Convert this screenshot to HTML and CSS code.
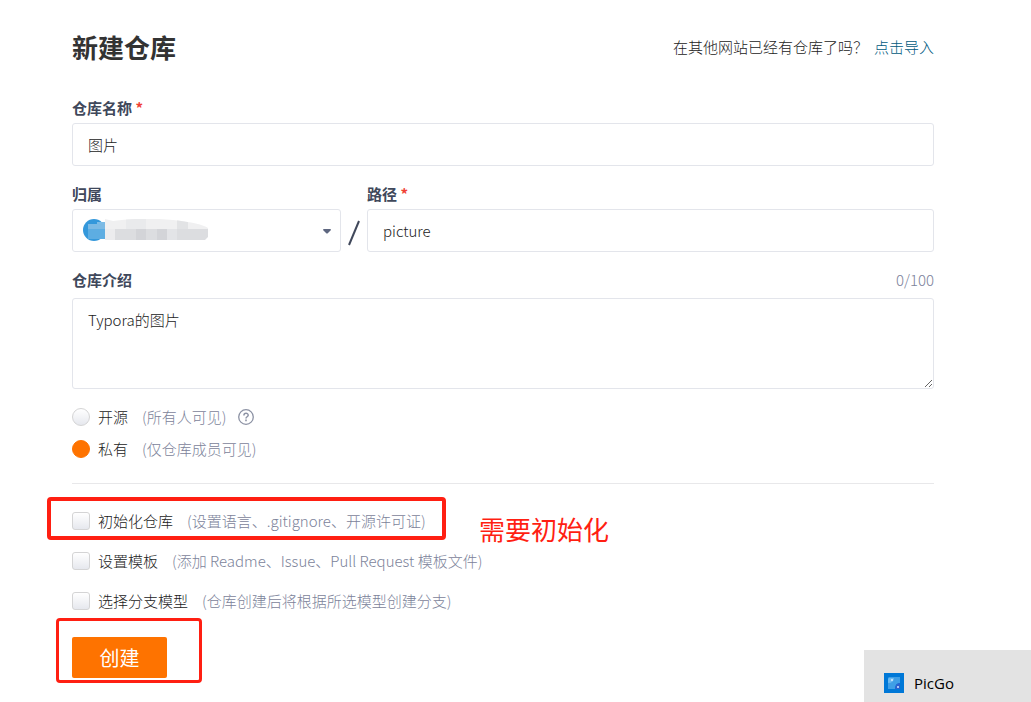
FILE: index.html
```html
<!DOCTYPE html>
<html lang="zh-CN">
<head>
    <meta charset="UTF-8">
    <meta name="viewport" content="width=device-width, initial-scale=1.0">
    <title>新建仓库</title>
    <link rel="stylesheet" href="styles.css">
</head>
<body>
    <main class="container">
        <header class="page-header">
            <h1>新建仓库</h1>
            <p class="import-tip">在其他网站已经有仓库了吗？<a href="#">点击导入</a></p>
        </header>

        <form>
            <div class="form-group">
                <label class="title" for="name">仓库名称 <span class="required">*</span></label>
                <input type="text" id="name" value="图片">
            </div>

            <div class="form-row">
                <div class="form-group owner">
                    <label class="title" for="owner">归属</label>
                    <div class="select-box">
                        <select id="owner">
                            <option></option>
                        </select>
                        <svg class="owner-mask" width="126" height="24" viewBox="0 0 126 24" aria-hidden="true">
                            <defs>
                                <clipPath id="mask-shape">
                                    <path d="M0 0H22L30 2Q60-2 90 1Q118 4 125 9V18L121 22H22V24H0Z"/>
                                </clipPath>
                            </defs>
                            <g clip-path="url(#mask-shape)">
                                <circle cx="11" cy="11" r="11" fill="#3498db"/>
                                <path fill="#7cbce7" d="M14 3h8v8h-8z"/>
                                <path fill="#5dade2" d="M5 5h17v15H5z"/>
                                <path fill="#7cbae4" d="M5 5h17v5H5z"/>
                                <path fill="#f0f0f1" d="M22 0h104v10H22z"/>
                                <path fill="#e9eaec" d="M43 0h20v10H43z"/>
                                <path fill="#e2e3e5" d="M94 0h11v10H94z"/>
                                <path fill="#ececee" d="M22 10h10v11H22z"/>
                                <path fill="#dcdde0" d="M32 10h94v11H32z"/>
                                <path fill="#d3d4d8" d="M53 10h10v11H53zM74 10h10v11H74z"/>
                                <path fill="#e3e4e7" d="M84 10h10v11H84z"/>
                            </g>
                        </svg>
                        <svg class="caret" width="8" height="5" viewBox="0 0 8 5" aria-hidden="true">
                            <path fill="#5e6780" d="M0 1Q0 0 1 0H7Q8 0 8 1L5 4Q4 5 3 4Z"/>
                        </svg>
                    </div>
                </div>
                <svg class="slash" width="12" height="26" viewBox="0 0 12 26" aria-hidden="true">
                    <path d="M11 1L1 25" stroke="#40485b" stroke-width="2"/>
                </svg>
                <div class="form-group path">
                    <label class="title" for="path">路径 <span class="required">*</span></label>
                    <input type="text" id="path" value="picture">
                </div>
            </div>

            <div class="form-group intro">
                <div class="title-row">
                    <label class="title" for="intro">仓库介绍</label>
                    <span class="counter">0/100</span>
                </div>
                <textarea id="intro">Typora的图片</textarea>
            </div>

            <div class="visibility">
                <div class="option">
                    <input type="radio" name="visibility" id="public">
                    <label for="public">开源<span class="hint">(所有人可见)</span></label>
                    <svg class="help" width="16" height="16" viewBox="0 0 16 16" fill="none" stroke="#8c92a4" aria-hidden="true">
                        <circle cx="8" cy="8" r="7.3" stroke-width="1.3"/>
                        <path d="M5.9 6.5C5.9 3.6 10.2 3.7 10.2 6.2C10.2 7.8 8 7.7 8 9.5" stroke-width="1.5"/>
                        <path d="M8 10.6V12.2" stroke-width="1.6"/>
                    </svg>
                </div>
                <div class="option">
                    <input type="radio" name="visibility" id="private" checked>
                    <label for="private">私有<span class="hint">(仅仓库成员可见)</span></label>
                </div>
            </div>

            <div class="settings">
                <div class="option">
                    <input type="checkbox" id="init">
                    <label for="init">初始化仓库<span class="hint">(设置语言、.gitignore、开源许可证)</span></label>
                    <div class="mark mark-init"></div>
                    <span class="mark-text">需要初始化</span>
                </div>
                <div class="option">
                    <input type="checkbox" id="template">
                    <label for="template">设置模板<span class="hint">(添加 Readme、Issue、Pull Request 模板文件)</span></label>
                </div>
                <div class="option">
                    <input type="checkbox" id="branch">
                    <label for="branch">选择分支模型<span class="hint">(仓库创建后将根据所选模型创建分支)</span></label>
                </div>
            </div>

            <div class="submit">
                <button type="submit">创建</button>
                <div class="mark mark-submit"></div>
            </div>
        </form>
    </main>

    <aside class="toast">
        <svg width="20" height="20" viewBox="0 0 20 20" aria-hidden="true">
            <path fill="#0078d7" d="M0 0h20v20H0z"/>
            <path fill="#3f9fe6" d="M5 4h11v6q-5 0-5 6H4V5z"/>
            <path fill="#6bb9f0" d="M5 5h5q0 5-6 5V6z"/>
            <path fill="#2b62cf" d="M16 10v6h-5q0-6 5-6z"/>
            <circle cx="8" cy="7" r="1" fill="#d8efff"/>
            <circle cx="14" cy="14" r="1" fill="#d5e6ff"/>
        </svg>
        <span>PicGo</span>
    </aside>
</body>
</html>
```

FILE: styles.css
```css
* {
    box-sizing: border-box;
}
body {
    margin: 0;
    background-color: #fff;
    color: #40485b;
    font-family: "Noto Sans CJK SC", sans-serif;
    font-size: 15px;
    font-weight: 300;
    line-height: 20px;
}
.container {
    padding: 28px 97px 20px 72px;
}

/* 页头 */
.page-header {
    display: flex;
    justify-content: space-between;
    align-items: center;
    margin-bottom: 32px;
}
h1 {
    margin: 0;
    font-size: 26px;
    line-height: 38px;
    font-weight: bold;
    color: #333;
}
.import-tip {
    margin: 0;
    color: #222;
}
a {
    color: #005980;
    text-decoration: none;
    margin-left: 6px;
}

/* 表单 */
.form-group {
    margin-bottom: 18px;
}
.title {
    display: block;
    margin-bottom: 5px;
    font-weight: bold;
}
.required {
    color: #f04134;
}
input[type="text"], select, textarea {
    display: block;
    width: 100%;
    height: 43px;
    padding: 0 15px;
    border: 1px solid #e3e5eb;
    border-radius: 3px;
    background-color: #fff;
    color: #222;
    font: inherit;
}
textarea {
    height: 91px;
    padding: 11px 15px;
    resize: vertical;
}
.form-row {
    display: flex;
    align-items: flex-end;
}
.owner {
    width: 269px;
}
.path {
    flex: 1;
}
.slash {
    margin: 0 7px 24px;
}
.select-box {
    position: relative;
}
select {
    appearance: none;
}
.owner-mask {
    position: absolute;
    left: 11px;
    top: 10px;
    pointer-events: none;
}
.caret {
    position: absolute;
    right: 10px;
    top: 20px;
    pointer-events: none;
}
.title-row {
    display: flex;
    justify-content: space-between;
    margin-bottom: 3px;
}
.counter, .hint {
    color: #7c839a;
}

/* 选项 */
.option {
    position: relative;
    display: flex;
    align-items: center;
    color: #222;
}
.option input {
    appearance: none;
    width: 18px;
    height: 18px;
    margin: 0 8px 0 0;
    border: 1px solid #d4d4d5;
    border-radius: 3px;
    background: linear-gradient(#fff, #e6e8ee);
}
.option input[type="radio"] {
    border-radius: 50%;
}
.option input[type="radio"]:checked {
    border-color: #fe7300;
    background: #fe7300;
}
.hint {
    margin-left: 14px;
}
.help {
    margin-left: 12px;
}
.visibility {
    display: grid;
    gap: 12px;
    padding-bottom: 24px;
    border-bottom: 1px solid #e8e8ea;
}
.settings {
    display: grid;
    gap: 20px;
    padding: 27px 0 26px;
}

/* 按钮 */
.submit {
    position: relative;
}
button {
    display: block;
    width: 95px;
    height: 41px;
    padding: 0;
    border: none;
    border-radius: 2px;
    background-color: #fe7300;
    color: #fff;
    font: inherit;
    font-size: 20px;
    font-weight: 400;
    cursor: pointer;
}

/* 红色标注 */
.mark {
    position: absolute;
    border: 4px solid #ff1f12;
    border-radius: 4px;
    pointer-events: none;
}
.mark-init {
    left: -25px;
    top: -14px;
    width: 399px;
    height: 43px;
}
.mark-submit {
    left: -16px;
    top: -19px;
    width: 146px;
    height: 65px;
    border-width: 3px;
}
.mark-text {
    position: absolute;
    left: 407px;
    top: 3px;
    color: #ff1f12;
    font-size: 26px;
    font-weight: 400;
    line-height: 30px;
}

/* 右下角通知 */
.toast {
    position: fixed;
    right: 0;
    bottom: 0;
    display: flex;
    align-items: center;
    gap: 10px;
    width: 167px;
    height: 52px;
    padding: 14px 20px 0;
    background-color: #e3e3e3;
    color: #000;
    font-family: "Open Sans", "Noto Sans", sans-serif;
    font-weight: 400;
}
```
